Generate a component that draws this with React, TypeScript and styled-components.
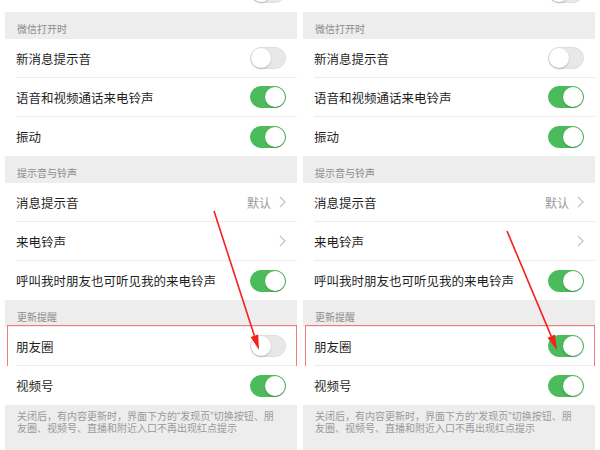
import { createGlobalStyle, styled } from 'styled-components'

const GlobalStyle = createGlobalStyle`
  html, body {
    margin: 0;
    padding: 0;
    background: #fff;
  }
  body {
    font-family: 'Noto Sans CJK SC', 'Noto Sans', sans-serif;
  }
`

const Page = styled.div`
  position: relative;
  display: flex;
  gap: 6px;
  padding: 0 5px;
  width: 600px;
  height: 450px;
  box-sizing: border-box;
  overflow: hidden;
  background: #fff;
`

const Panel = styled.div`
  flex: 1;
  min-width: 0;
  margin-top: -28px;
  display: flex;
  flex-direction: column;
`

const Header = styled.div`
  height: 27px;
  display: flex;
  align-items: flex-end;
  padding: 0 0 4px 12px;
  box-sizing: border-box;
  background: #ededed;
  color: #8c8c8c;
  font-size: 10px;
  line-height: 12px;
`

const Row = styled.div<{ $highlight?: boolean; $tall?: boolean }>`
  position: relative;
  height: ${(p) => (p.$tall ? 40 : 39)}px;
  padding-left: 11px;
  background: #fff;
  display: flex;

  ${(p) =>
    p.$highlight &&
    `
    &::after {
      content: '';
      position: absolute;
      left: 2px;
      right: 0;
      top: -2px;
      bottom: -1px;
      border: 1px solid #f27a7a;
      pointer-events: none;
    }
  `}
`

const RowBody = styled.div<{ $divider: boolean }>`
  flex: 1;
  display: flex;
  align-items: center;
  justify-content: space-between;
  padding-right: 10px;
  border-bottom: ${(p) => (p.$divider ? '1px solid #ececec' : 'none')};
`

const Title = styled.span`
  font-size: 12.5px;
  color: #1f1f1f;
  white-space: nowrap;
`

const Accessory = styled.div`
  display: flex;
  align-items: center;
  gap: 8px;
  padding-right: 1px;
`

const Value = styled.span`
  font-size: 12px;
  color: #9a9a9a;
`

const Switch = styled.div<{ $on: boolean }>`
  position: relative;
  width: 36px;
  height: 22px;
  border-radius: 11px;
  box-sizing: border-box;
  background: ${(p) => (p.$on ? '#4cbb5c' : '#e8e8e8')};
  border: 1px solid ${(p) => (p.$on ? '#4cbb5c' : '#dedede')};

  &::after {
    content: '';
    position: absolute;
    top: 0;
    left: ${(p) => (p.$on ? '14px' : '0')};
    width: 20px;
    height: 20px;
    border-radius: 50%;
    background: #fff;
    box-shadow: 0 1px 2px rgba(0, 0, 0, 0.22);
  }
`

// latin font first so the quotes come out narrow, CJK falls through
const Footer = styled.div`
  flex: 1;
  background: #ededed;
  padding: 6px 17px 0 12px;
  color: #9a9a9a;
  font-family: 'Liberation Sans', 'Noto Sans CJK SC', sans-serif;
  font-size: 10px;
  line-height: 12px;
`

const Overlay = styled.svg`
  position: absolute;
  left: 0;
  top: 0;
  pointer-events: none;
`

type Item =
  | { kind: 'header'; text: string }
  | { kind: 'row'; text: string; toggle?: boolean; value?: string; chevron?: boolean; highlight?: boolean; tall?: boolean; last?: boolean }

const buildItems = (moments: boolean): Item[] => [
  { kind: 'row', text: '', toggle: false, tall: true, last: true },
  { kind: 'header', text: '微信打开时' },
  { kind: 'row', text: '新消息提示音', toggle: false },
  { kind: 'row', text: '语音和视频通话来电铃声', toggle: true },
  { kind: 'row', text: '振动', toggle: true, last: true },
  { kind: 'header', text: '提示音与铃声' },
  { kind: 'row', text: '消息提示音', value: '默认', chevron: true },
  { kind: 'row', text: '来电铃声', chevron: true },
  { kind: 'row', text: '呼叫我时朋友也可听见我的来电铃声', toggle: true, last: true },
  { kind: 'header', text: '更新提醒' },
  { kind: 'row', text: '朋友圈', toggle: moments, highlight: true },
  { kind: 'row', text: '视频号', toggle: true, last: true },
]

const Chevron = () => (
  <svg width="7" height="12" viewBox="0 0 7 12">
    <polyline points="1,1 6,6 1,11" fill="none" stroke="#c4c4c4" strokeWidth="1.3" />
  </svg>
)

const SettingsPanel = ({ moments }: { moments: boolean }) => (
  <Panel>
    {buildItems(moments).map((item, i) =>
      item.kind === 'header' ? (
        <Header key={i}>{item.text}</Header>
      ) : (
        <Row key={i} $highlight={item.highlight} $tall={item.tall}>
          <RowBody $divider={!item.last}>
            <Title>{item.text}</Title>
            <Accessory>
              {item.value && <Value>{item.value}</Value>}
              {item.chevron && <Chevron />}
              {item.toggle !== undefined && <Switch $on={item.toggle} />}
            </Accessory>
          </RowBody>
        </Row>
      )
    )}
    <Footer>
      关闭后，有内容更新时，界面下方的“发现页”切换按钮、朋友圈、视频号、直播和附近入口不再出现红点提示
    </Footer>
  </Panel>
)

// arrow from start to tip, head drawn as a filled triangle
const arrowPath = (x1: number, y1: number, x2: number, y2: number) => {
  const dx = x2 - x1
  const dy = y2 - y1
  const len = Math.hypot(dx, dy)
  const ux = dx / len
  const uy = dy / len
  const head = 15
  const half = 4
  const bx = x2 - ux * head
  const by = y2 - uy * head
  return {
    line: { x1, y1, x2: bx, y2: by },
    head: `${x2},${y2} ${bx - uy * half},${by + ux * half} ${bx + uy * half},${by - ux * half}`,
  }
}

const arrows = [arrowPath(214, 211, 259, 350), arrowPath(507, 231, 557, 350)]

export default function App() {
  return (
    <>
      <GlobalStyle />
      <Page>
        <SettingsPanel moments={false} />
        <SettingsPanel moments={true} />
        <Overlay width="600" height="450" viewBox="0 0 600 450">
          {arrows.map((a, i) => (
            <g key={i}>
              <line {...a.line} stroke="#f2221c" strokeWidth="1.6" />
              <polygon points={a.head} fill="#f2221c" />
            </g>
          ))}
        </Overlay>
      </Page>
    </>
  )
}
